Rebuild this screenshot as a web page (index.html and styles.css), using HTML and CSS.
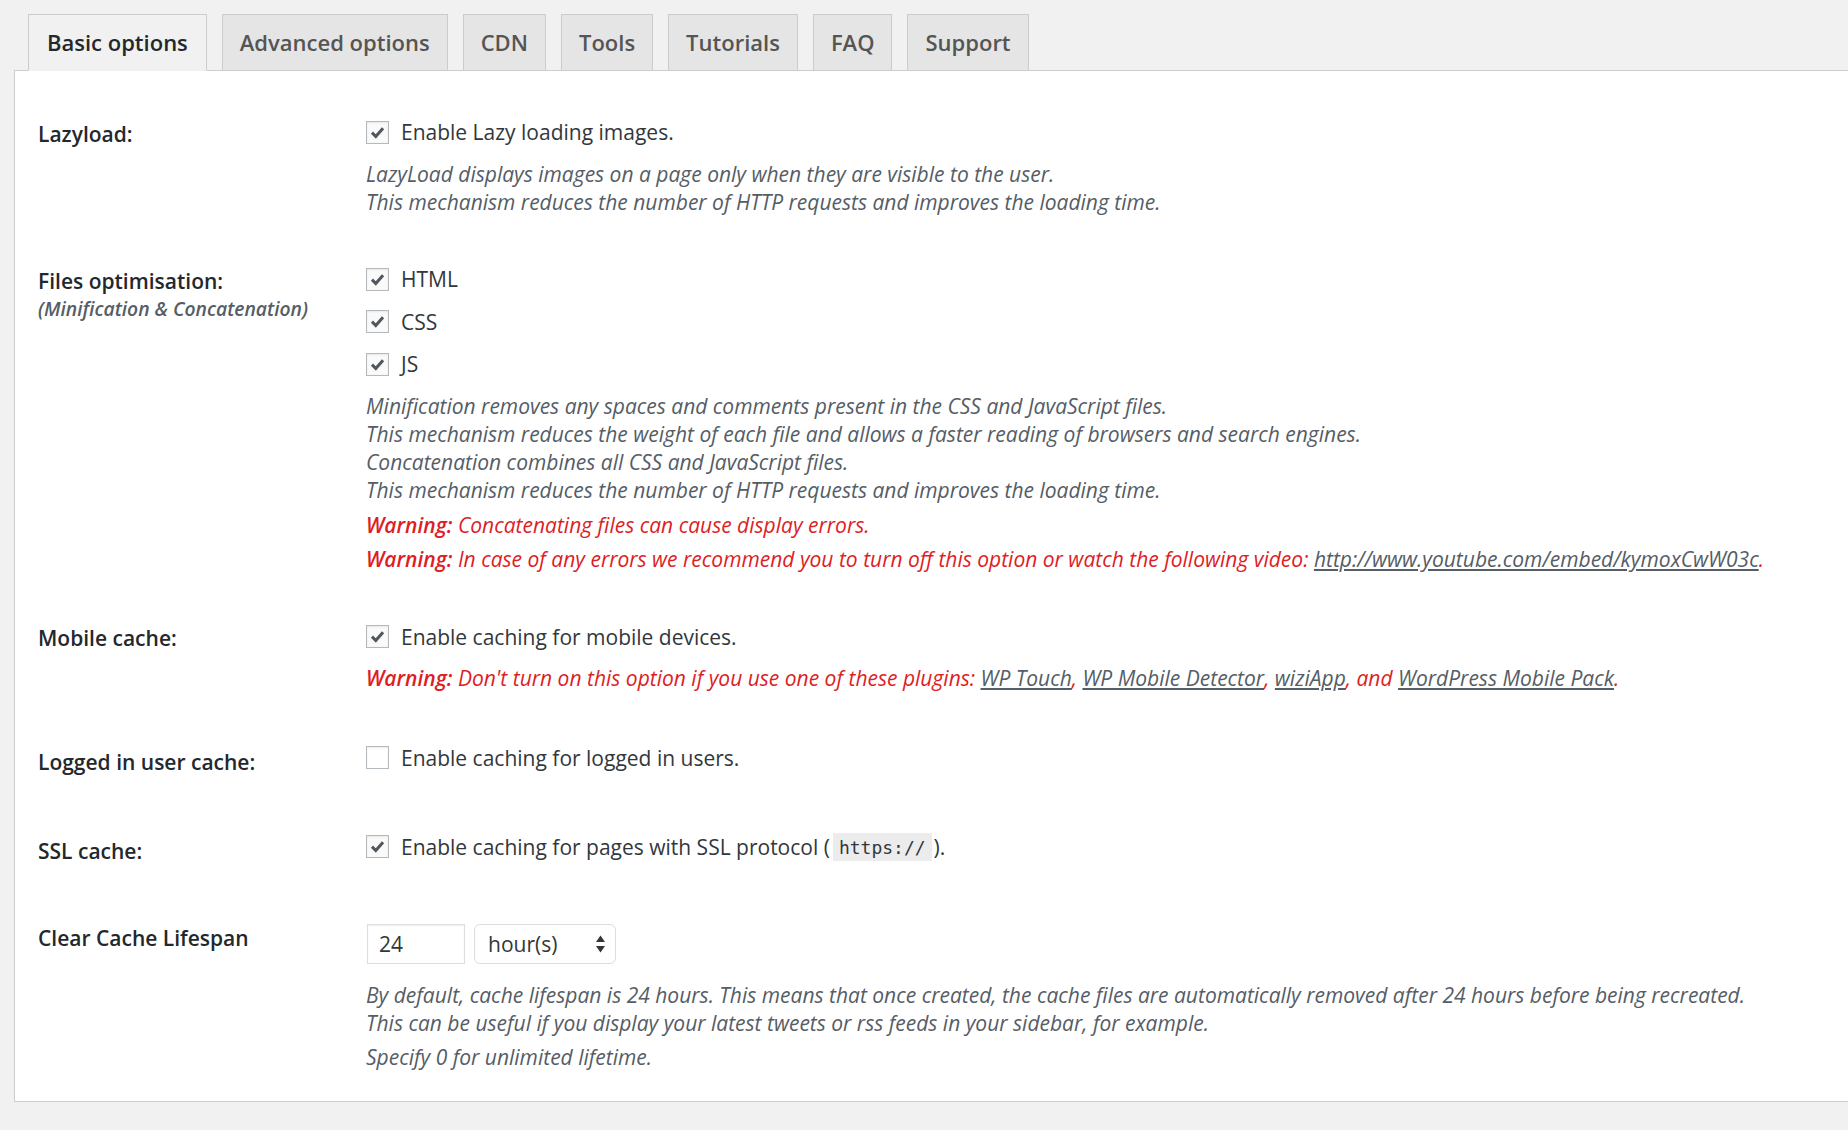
FILE: index.html
```html
<!DOCTYPE html>
<html lang="en">
<head>
<meta charset="utf-8">
<title>Basic options</title>
<link rel="stylesheet" href="styles.css">
</head>
<body>
<div class="wrap">
  <nav class="tabs">
    <a class="tab tab-active">Basic options</a>
    <a class="tab">Advanced options</a>
    <a class="tab">CDN</a>
    <a class="tab">Tools</a>
    <a class="tab">Tutorials</a>
    <a class="tab">FAQ</a>
    <a class="tab">Support</a>
  </nav>
  <div class="panel">
    <div class="row">
      <div class="row-label">Lazyload:</div>
      <div class="row-field">
        <label class="option"><span class="cb"><svg viewBox="0 0 22 22"><path d="M5.2 11.2 L9.2 15.2 L16.8 6.6"/></svg></span>Enable Lazy loading images.</label>
        <p class="desc">LazyLoad displays images on a page only when they are visible to the user.<br>This mechanism reduces the number of HTTP requests and improves the loading time.</p>
      </div>
    </div>

    <div class="row">
      <div class="row-label">Files optimisation:<span class="sublabel">(Minification &amp; Concatenation)</span></div>
      <div class="row-field">
        <label class="option"><span class="cb"><svg viewBox="0 0 22 22"><path d="M5.2 11.2 L9.2 15.2 L16.8 6.6"/></svg></span>HTML</label>
        <label class="option"><span class="cb"><svg viewBox="0 0 22 22"><path d="M5.2 11.2 L9.2 15.2 L16.8 6.6"/></svg></span>CSS</label>
        <label class="option"><span class="cb"><svg viewBox="0 0 22 22"><path d="M5.2 11.2 L9.2 15.2 L16.8 6.6"/></svg></span>JS</label>
        <p class="desc">Minification removes any spaces and comments present in the CSS and JavaScript files.<br>This mechanism reduces the weight of each file and allows a faster reading of browsers and search engines.<br>Concatenation combines all CSS and JavaScript files.<br>This mechanism reduces the number of HTTP requests and improves the loading time.</p>
        <p class="desc warn"><strong>Warning:</strong> Concatenating files can cause display errors.</p>
        <p class="desc warn"><strong>Warning:</strong> In case of any errors we recommend you to turn off this option or watch the following video: <a class="link">http://www.youtube.com/embed/kymoxCwW03c</a>.</p>
      </div>
    </div>

    <div class="row">
      <div class="row-label">Mobile cache:</div>
      <div class="row-field">
        <label class="option"><span class="cb"><svg viewBox="0 0 22 22"><path d="M5.2 11.2 L9.2 15.2 L16.8 6.6"/></svg></span>Enable caching for mobile devices.</label>
        <p class="desc warn"><strong>Warning:</strong> Don't turn on this option if you use one of these plugins: <a class="link">WP Touch</a>, <a class="link">WP Mobile Detector</a>, <a class="link">wiziApp</a>, and <a class="link">WordPress Mobile Pack</a>.</p>
      </div>
    </div>

    <div class="row row-single">
      <div class="row-label">Logged in user cache:</div>
      <div class="row-field">
        <label class="option"><span class="cb cb-off"></span>Enable caching for logged in users.</label>
      </div>
    </div>

    <div class="row row-single">
      <div class="row-label">SSL cache:</div>
      <div class="row-field">
        <label class="option"><span class="cb"><svg viewBox="0 0 22 22"><path d="M5.2 11.2 L9.2 15.2 L16.8 6.6"/></svg></span>Enable caching for pages with SSL protocol (<code class="code">https://</code>).</label>
      </div>
    </div>

    <div class="row row-lifespan">
      <div class="row-label">Clear Cache Lifespan</div>
      <div class="row-field">
        <div class="inline-fields">
          <span class="input">24</span>
          <span class="select">hour(s)<svg class="arrows" viewBox="0 0 11 20"><path d="M5.5 1.5 L10 8 L1 8 Z"/><path d="M5.5 18.5 L10 12 L1 12 Z"/></svg></span>
        </div>
        <p class="desc">By default, cache lifespan is 24 hours. This means that once created, the cache files are automatically removed after 24 hours before being recreated.<br>This can be useful if you display your latest tweets or rss feeds in your sidebar, for example.</p>
        <p class="desc">Specify 0 for unlimited lifetime.</p>
      </div>
    </div>
  </div>
</div>
</body>
</html>
```

FILE: styles.css
```css
html, body {
  margin: 0;
  padding: 0;
  background: #f1f1f1;
  font-family: "Open Sans", "DejaVu Sans", sans-serif;
  color: #32373c;
  overflow: hidden;
}

.wrap {
  padding: 14px 0 0 14px;
}

.tabs {
  display: flex;
  gap: 15px;
  padding-left: 14px;
  position: relative;
  z-index: 2;
  margin-bottom: -1px;
}

.tab {
  display: block;
  padding: 0 17px;
  height: 55px;
  line-height: 55px;
  font-size: 22px;
  font-weight: 600;
  color: #555;
  background: #e5e5e5;
  border: 1px solid #ccc;
  white-space: nowrap;
}

.tab-active {
  padding: 0 18px;
  background: #f1f1f1;
  color: #23282d;
  border-bottom-color: #f1f1f1;
}

.panel {
  background: #fff;
  border: 1px solid #ccc;
  border-right: none;
  padding: 19px 0 8px 23px;
}

.row {
  --pt: 21px;
  --pb: 21px;
  --lo: 8.5px;
  display: grid;
  grid-template-columns: 328px 1fr;
}

.row-single {
  --pt: 23.5px;
  --pb: 23px;
  --lo: 11px;
}

.row-lifespan {
  --pt: 24.5px;
  --pb: 21px;
  --lo: 8.5px;
}

.row-label {
  padding-top: calc(var(--pt) + var(--lo));
  font-size: 21px;
  line-height: 28px;
  font-weight: 600;
  color: #23282d;
}

.sublabel {
  display: block;
  font-size: 19.3px;
  font-style: italic;
  font-weight: 600;
  color: #555d66;
}

.row-field {
  padding: var(--pt) 0 var(--pb);
}

.option {
  display: flex;
  align-items: center;
  height: 42.5px;
  font-size: 21px;
  color: #32373c;
  white-space: nowrap;
}

.cb {
  flex: none;
  width: 21px;
  height: 21px;
  margin-right: 12px;
  border: 1px solid #b4b9be;
  background: #fafafa;
  box-shadow: inset 0 1px 2px rgba(0, 0, 0, 0.08);
  display: flex;
  align-items: center;
  justify-content: center;
}

.cb svg {
  width: 21px;
  height: 21px;
}

.cb svg path {
  fill: none;
  stroke: #50575e;
  stroke-width: 3.2;
  stroke-linecap: butt;
  stroke-linejoin: miter;
}

.cb-off {
  background: #fff;
}

.desc {
  margin: 6px 0 0;
  font-size: 21px;
  line-height: 28.3px;
  font-style: italic;
  color: #555d66;
  white-space: nowrap;
}

.warn {
  color: #dd1e25;
}

.warn strong {
  font-weight: 600;
}

.link {
  color: #555d66;
  text-decoration: underline;
}

.code {
  font-family: "DejaVu Sans Mono", "Liberation Mono", monospace;
  font-size: 18px;
  background: #ececec;
  padding: 4px 6px 3px;
  margin: 0 2px 0 3px;
  color: #32373c;
}

.inline-fields {
  display: flex;
  gap: 9px;
  margin: 8px 0 17px 1px;
}

.input {
  box-sizing: border-box;
  width: 98px;
  height: 40px;
  padding-left: 11px;
  border: 1px solid #ddd;
  box-shadow: inset 0 1px 2px rgba(0, 0, 0, 0.07);
  background: #fff;
  font-size: 21px;
  line-height: 38px;
  color: #32373c;
}

.select {
  box-sizing: border-box;
  width: 142px;
  height: 40px;
  padding: 0 9px 0 13px;
  border: 1px solid #ddd;
  border-radius: 6px;
  background: #fff;
  font-size: 21px;
  line-height: 38px;
  color: #32373c;
  display: flex;
  align-items: center;
  justify-content: space-between;
}

.arrows {
  width: 11px;
  height: 20px;
  fill: #32373c;
}
```
